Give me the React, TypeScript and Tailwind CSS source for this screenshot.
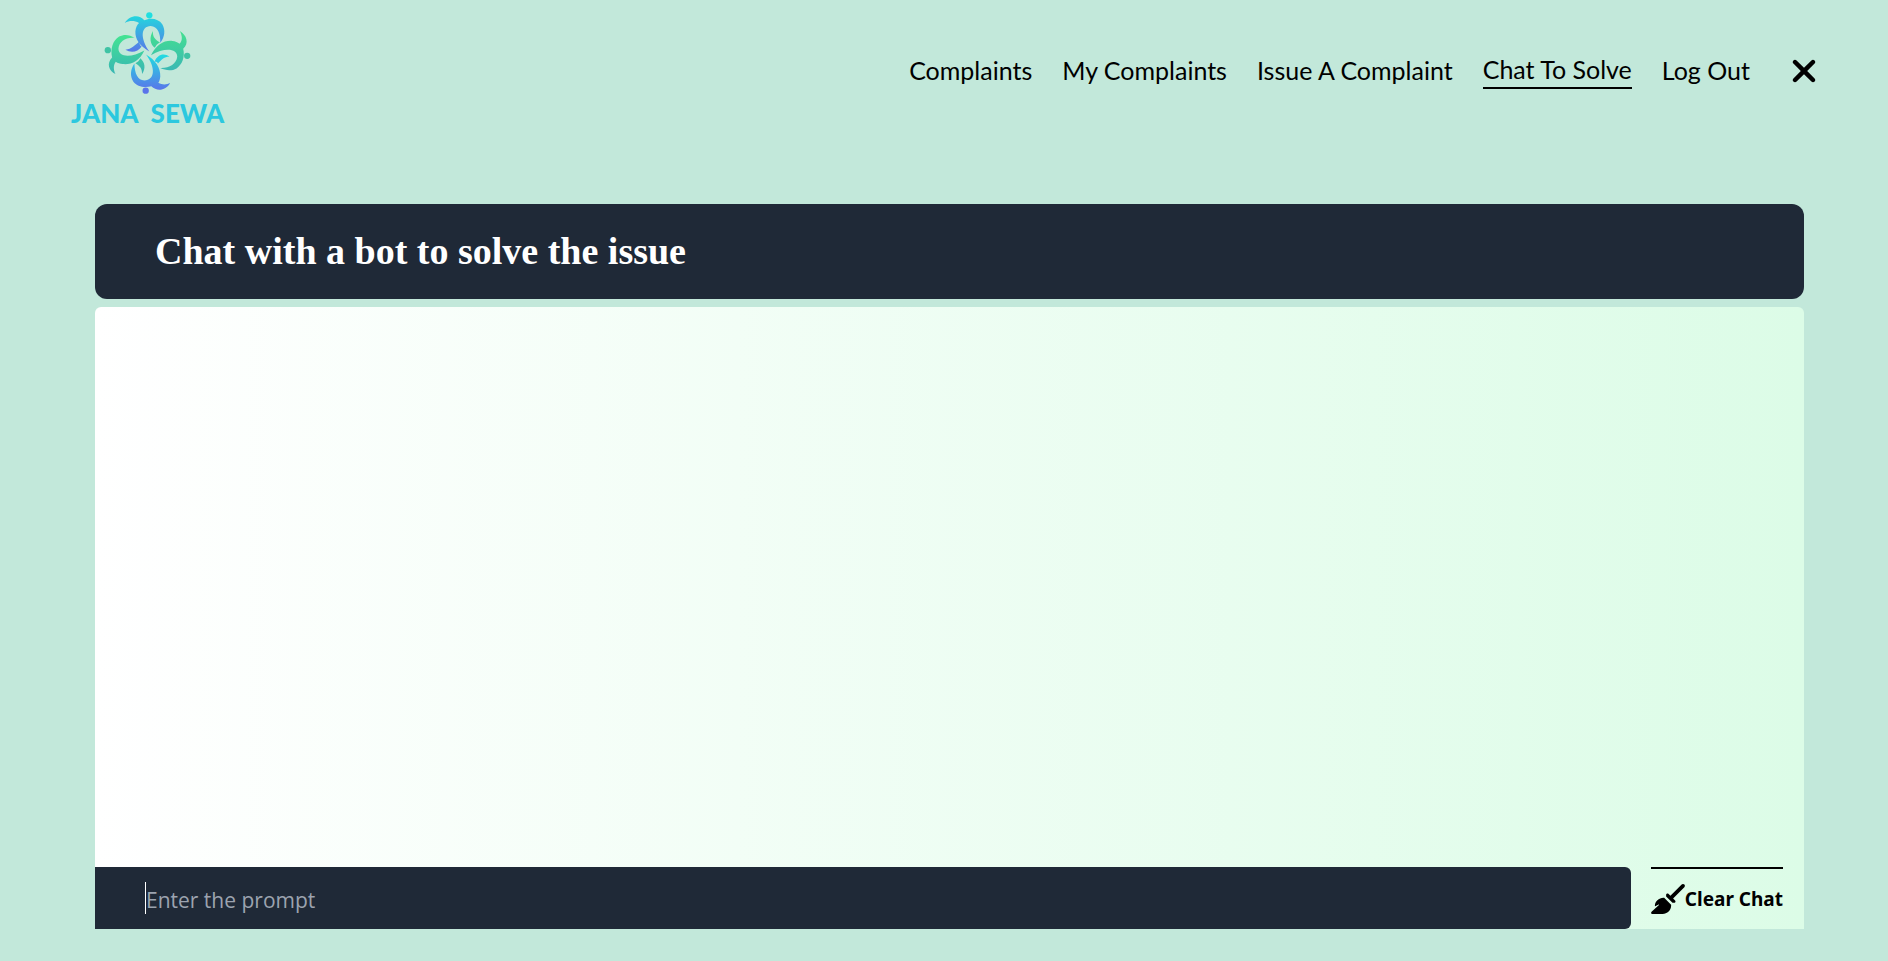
import { FaBroom, FaXmark } from "react-icons/fa6";

const links = [
  { label: "Complaints" },
  { label: "My Complaints" },
  { label: "Issue A Complaint" },
  { label: "Chat To Solve", active: true },
  { label: "Log Out" },
];

function LogoMark() {
  return (
    <svg viewBox="136 30 264 256" className="h-[85px] w-[88px]" aria-hidden="true">
      <defs>
        <linearGradient id="top" gradientUnits="userSpaceOnUse" x1="0" y1="45" x2="0" y2="155">
          <stop offset="0" stopColor="#22d9dd" />
          <stop offset="1" stopColor="#5878e8" />
        </linearGradient>
        <linearGradient id="right" gradientUnits="userSpaceOnUse" x1="0" y1="93" x2="0" y2="213">
          <stop offset="0" stopColor="#43e08f" />
          <stop offset="1" stopColor="#3bb8b4" />
        </linearGradient>
        <linearGradient id="bottom" gradientUnits="userSpaceOnUse" x1="0" y1="162" x2="0" y2="272">
          <stop offset="0" stopColor="#20dfe0" />
          <stop offset="1" stopColor="#5a74ea" />
        </linearGradient>
        <linearGradient id="left" gradientUnits="userSpaceOnUse" x1="0" y1="103" x2="0" y2="223">
          <stop offset="0" stopColor="#43e591" />
          <stop offset="1" stopColor="#39b5b4" />
        </linearGradient>
      </defs>
      <g fill="url(#top)">
        <path d="M198 69C210 48 240 40 257 61C276 52 300 56 311 73C321 90 319 111 305 129C306 100 297 79 276 78C246 79 244 115 272 155C243 138 229 118 230 94C231 83 235 75 241 69C226 61 212 62 198 69Z" />
        <path d="M200 150C219 147 228 137 242 125C242 134 245 139 249 140C237 158 216 160 200 150Z" />
      </g>
      <circle cx="272" cy="46" r="9.500" fill="#20dfe0" />
      <g fill="url(#right)">
        <path d="M277 166C293 134 316 121 341 123C351 124 357 127 363 132C373 121 371 107 364 93C384 105 393 129 374 147C380 171 371 195 354 206C340 214 322 213 305 205C332 206 354 192 356 171C356 145 317 143 277 166Z" />
        <path d="M283 93C281 112 291 119 304 128C296 132 291 137 289 144C274 133 271 112 283 93Z" />
      </g>
      <circle cx="386" cy="168" r="9.500" fill="#3fc3a4" />
      <g fill="url(#bottom)">
        <path d="M262 164C291 181 306 204 305 230C304 239 302 245 299 249C312 256 323 255 335 250C322 273 295 277 278 260C257 265 235 261 224 246C213 229 215 208 227 191C228 223 237 241 257 242C289 241 292 204 262 164Z" />
        <path d="M288 185C295 165 315 157 333 170C316 171 310 179 298 191C297 188 294 185 288 185Z" />
      </g>
      <circle cx="261" cy="273" r="9.500" fill="#5a74ea" />
      <g fill="url(#left)">
        <path d="M257 152C243 184 216 196 192 193C183 192 177 190 171 186C163 196 164 210 170 223C150 213 142 191 160 173C154 147 162 122 181 110C196 102 213 104 228 114C202 111 180 125 179 147C180 174 219 174 257 152Z" />
        <path d="M245 175C259 188 262 205 250 223C251 206 243 198 230 190C237 187 242 182 245 175Z" />
      </g>
      <circle cx="147" cy="151" r="9.500" fill="#3fc3a4" />
    </svg>
  );
}

export default function App() {
  return (
    <div className="flex min-h-screen flex-col bg-[#c2e8da] text-black">
      <header className="flex items-start justify-between pr-[66px] pl-[71px]">
        <a href="#" className="flex flex-col items-center pt-[10px] text-[#2cc8df]">
          <LogoMark />
          <span className="flex gap-3 font-['Lato',sans-serif] text-[26px] leading-9 font-black">
            <span>JANA</span> <span>SEWA</span>
          </span>
        </a>
        <nav className="flex items-center gap-[30px] pt-[52px] font-['Lato',sans-serif] text-[25px]">
          {links.map((link) => (
            <a
              key={link.label}
              href="#"
              className={link.active ? "border-b-2 border-black leading-[35px]" : "leading-[35px]"}
            >
              {link.label}
            </a>
          ))}
          <button type="button" aria-label="Close menu" className="ml-1.5">
            <FaXmark className="size-9" />
          </button>
        </nav>
      </header>

      <main className="mt-[73px] mr-[84px] mb-8 ml-[95px] flex flex-1 flex-col gap-2">
        <h1 className="rounded-xl bg-[#1f2937] px-[60px] py-6 font-['Liberation_Serif',serif] text-[38px] leading-[47px] font-bold text-white">
          Chat with a bot to solve the issue
        </h1>
        <section className="flex flex-1 flex-col rounded-t-md bg-linear-to-r from-white to-[#dcfce7]">
          <div className="flex-1" />
          <form className="flex gap-5 pr-[21px]">
            <label className="flex h-[62px] flex-1 items-center rounded-r-md bg-[#1f2937] pl-[50px]">
              <span className="h-8 w-px bg-white" />
              <input
                type="text"
                aria-label="Prompt"
                placeholder="Enter the prompt"
                className="w-full bg-transparent pt-1.5 font-['Open_Sans',sans-serif] text-[21px] text-white outline-none placeholder:text-[#9ca3af]"
              />
            </label>
            <button
              type="button"
              className="flex items-center border-t-2 border-black font-['Noto_Sans',sans-serif] text-[19px] font-bold"
            >
              <FaBroom className="h-[30px] w-[34px]" />
              Clear Chat
            </button>
          </form>
        </section>
      </main>
    </div>
  );
}
